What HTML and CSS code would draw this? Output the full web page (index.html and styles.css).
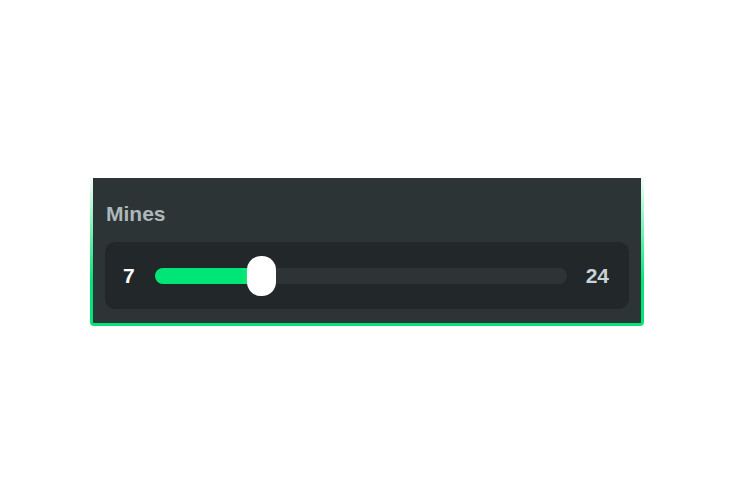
FILE: index.html
```html
<!DOCTYPE html>
<html>
<head>
<meta charset="utf-8">
<link rel="stylesheet" href="styles.css">
</head>
<body>
<div class="frame">
  <div class="panel">
    <div class="label">Mines</div>
    <div class="slider-box">
      <span class="value">7</span>
      <div class="track">
        <div class="fill" style="width: 26%"></div>
        <div class="thumb" style="left: 26%"></div>
      </div>
      <span class="max">24</span>
    </div>
  </div>
</div>
</body>
</html>
```

FILE: styles.css
```css
html, body {
  margin: 0;
  background: #ffffff;
}
body {
  padding: 178px 0 0 90px;
  font-family: "Liberation Sans", Arial, sans-serif;
}
.frame {
  width: 554px;
  padding: 0 3px 3px 3px;
  box-sizing: border-box;
  background: linear-gradient(180deg, rgba(0, 230, 118, 0.04) 0%, rgba(0, 230, 118, 0.6) 40%, #00e676 70%, #00e676 100%);
  border-radius: 0 0 4px 4px;
}
.panel {
  background: #2d3436;
  height: 145px;
  box-sizing: border-box;
  padding: 23px 12px 0 12px;
}
.label {
  color: #aeb7ba;
  font-size: 21px;
  font-weight: bold;
  line-height: 26px;
  padding-left: 1px;
}
.slider-box {
  margin-top: 15px;
  height: 67px;
  background: #222829;
  border-radius: 10px;
  display: flex;
  align-items: center;
  padding: 0 20px 0 18px;
}
.value {
  color: #ffffff;
  font-size: 21px;
  font-weight: bold;
  width: 12px;
}
.max {
  color: #c8d2d7;
  font-size: 21px;
  font-weight: bold;
}
.track {
  position: relative;
  flex: 1;
  height: 16px;
  margin: 0 19px 0 20px;
  background: #2e3436;
  border-radius: 8px;
}
.fill {
  position: absolute;
  left: 0;
  top: 0;
  bottom: 0;
  background: linear-gradient(90deg, #00e676 0%, #00e676 80%, #45e07c 100%);
  border-radius: 8px 0 0 8px;
}
.thumb {
  position: absolute;
  top: 50%;
  width: 29px;
  height: 40px;
  margin-left: -15px;
  transform: translateY(-50%);
  background: #ffffff;
  border-radius: 14px;
}
```
